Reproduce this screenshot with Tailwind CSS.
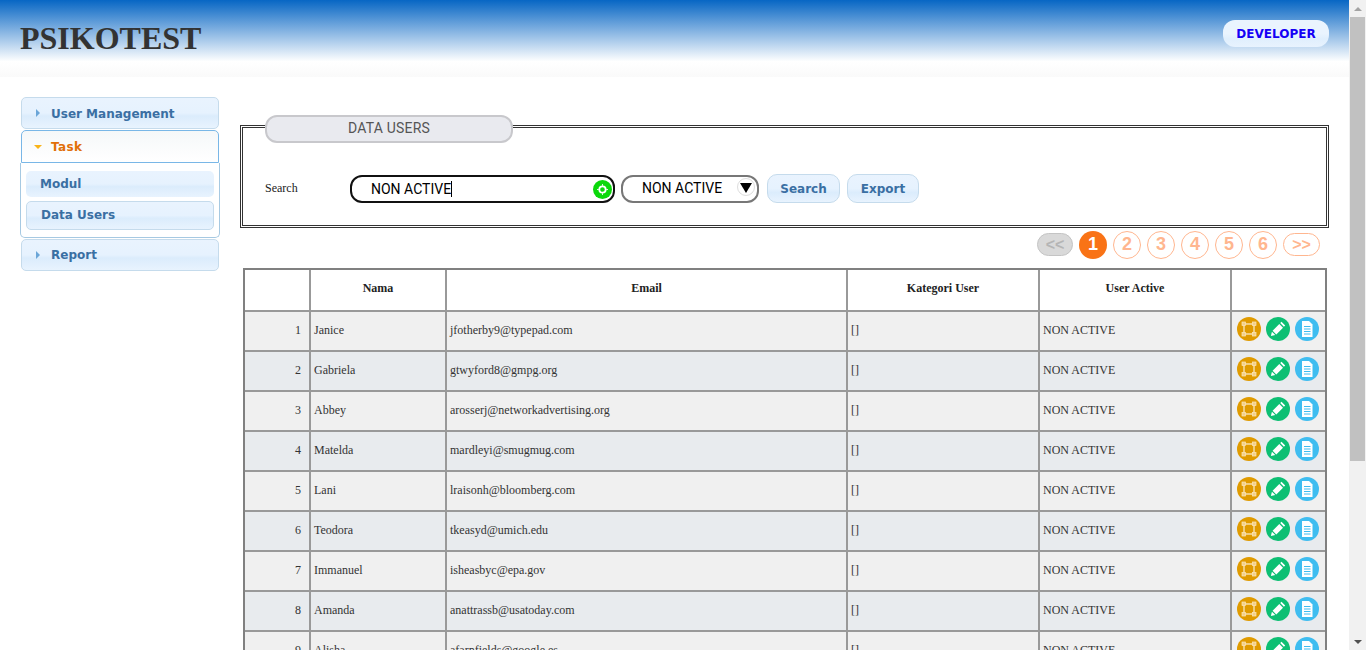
<!DOCTYPE html>
<html>
<head>
<meta charset="utf-8">
<script src="https://cdn.jsdelivr.net/npm/@tailwindcss/browser@4"></script>
</head>
<body class="bg-white h-[650px] overflow-hidden flex font-['Liberation_Serif',serif] text-[12px] text-[#333]">
<div class="w-[1349px] h-[650px] overflow-hidden shrink-0">
  <header class="h-[77px] bg-[linear-gradient(#0766c4_0%,#ffffff_80%,#fafafa_100%)] flex items-center justify-between pl-[20px] pr-[20px]">
    <h1 class="font-bold text-[32px] leading-none text-[#333] m-0 mb-[2px]">PSIKOTEST</h1>
    <span class="w-[106px] h-[27px] mb-[10px] rounded-[12px] bg-[linear-gradient(#eaf4fe_0%,#eaf4fe_50%,#e0effd_70%,#e8f3fe_100%)] flex items-center justify-center font-['DejaVu_Sans',sans-serif] font-bold text-[12px] text-[#1500f5]">DEVELOPER</span>
  </header>
  <div class="flex items-start pt-[20px]">
    <aside class="w-[198px] ml-[21px] shrink-0 font-['DejaVu_Sans',sans-serif] font-bold text-[12px]">
      <div class="h-[32px] rounded-[5px] border border-[#c5dbec] bg-[linear-gradient(#e9f3fe_0%,#e6f2fe_50%,#dbecfc_60%,#e8f3fe_100%)] flex items-center pl-[14px] text-[#3a6fa3] mb-[1px]">
        <span class="w-0 h-0 border-y-[4px] border-y-transparent border-l-[4px] border-l-[#6ba6d8] mr-[11px]"></span><span class="mt-[1px]">User Management</span>
      </div>
      <div class="h-[33px] rounded-t-[5px] border border-[#79b7e7] bg-[linear-gradient(#f5f8f9,#ffffff)] flex items-center pl-[12px] text-[#e17009]">
        <span class="w-0 h-0 border-x-[4px] border-x-transparent border-t-[4px] border-t-[#f9b418] mr-[9px]"></span><span class="tracking-[0.4px]">Task</span>
      </div>
      <div class="h-[75px] -mx-[1px] rounded-b-[5px] border border-t-0 border-[#a6c9e2] px-[5px] pt-[8px] text-[#3a6fa3]">
        <div class="h-[26px] rounded-[5px] bg-[linear-gradient(#e9f3fe_0%,#e6f2fe_50%,#dbecfc_60%,#e8f3fe_100%)] flex items-center pl-[14px] mb-[4px]">Modul</div>
        <div class="h-[29px] rounded-[5px] border border-[#c5dbec] bg-[linear-gradient(#e9f3fe_0%,#e6f2fe_50%,#dbecfc_60%,#e8f3fe_100%)] flex items-center pl-[14px] pb-[2px]">Data Users</div>
      </div>
      <div class="mt-[1px] h-[32px] rounded-[5px] border border-[#c5dbec] bg-[linear-gradient(#e9f3fe_0%,#e6f2fe_50%,#dbecfc_60%,#e8f3fe_100%)] flex items-center pl-[14px] text-[#3a6fa3]">
        <span class="w-0 h-0 border-y-[4px] border-y-transparent border-l-[4px] border-l-[#6ba6d8] mr-[11px]"></span>Report
      </div>
    </aside>
    <main class="ml-[21px] w-[1089px] shrink-0">
      <section class="relative border-[3px] border-double border-[#333] h-[103px] mt-[28px] pl-[22px] pr-[10px]">
        <h2 class="absolute left-[22px] -top-[13px] w-[248px] h-[28px] pb-[2px] rounded-[12px] border-2 border-[#c8c8cc] bg-[#e9eaef] flex items-center justify-center font-['Roboto',sans-serif] font-normal text-[14px] tracking-[0.2px] text-[#555]">DATA USERS</h2>
        <div class="flex items-center pt-[46px]">
          <label class="w-[85px] text-[12px] text-[#222] mb-[2px]">Search</label>
          <div class="relative w-[265px] h-[28px] rounded-[12px] border-2 border-[#111] flex items-center pl-[19px] font-['Roboto',sans-serif] text-[14px] text-black">
            <span class="border-r border-black leading-[16px]">NON ACTIVE</span>
            <span class="absolute right-[1px] top-[3px] w-[19px] h-[19px] rounded-full bg-[#0bd80b] flex items-center justify-center">
              <svg width="15" height="15" viewBox="0 0 15 15"><circle cx="7.500" cy="7.500" r="3.200" fill="none" stroke="#fff" stroke-width="1.800"/><path d="M7.500 2v2M7.500 11v2M2 7.500h2M11 7.500h2" stroke="#d8f8d8" stroke-width="1"/></svg>
            </span>
          </div>
          <div class="relative ml-[6px] w-[138px] h-[28px] rounded-[12px] border-2 border-[#777] flex items-center pl-[19px] font-['Roboto',sans-serif] text-[14px] text-black">
            NON ACTIVE
            <span class="absolute right-[2px] top-[1px] w-[18px] h-[18px] rounded-full border border-[#ddd] flex items-center justify-center">
              <span class="w-0 h-0 border-x-[6px] border-x-transparent border-t-[10px] border-t-black mt-[2px]"></span>
            </span>
          </div>
          <button class="ml-[8px] w-[73px] h-[29px] rounded-[10px] border border-[#c5dbec] bg-[linear-gradient(#e9f3fe_0%,#e6f2fe_50%,#dbecfc_65%,#e8f3fe_100%)] font-['DejaVu_Sans',sans-serif] font-bold text-[12px] text-[#3a6fa3]">Search</button>
          <button class="ml-[7px] w-[72px] h-[29px] rounded-[10px] border border-[#c5dbec] bg-[linear-gradient(#e9f3fe_0%,#e6f2fe_50%,#dbecfc_65%,#e8f3fe_100%)] font-['DejaVu_Sans',sans-serif] font-bold text-[12px] text-[#3a6fa3]">Export</button>
        </div>
      </section>
      <nav class="flex items-center justify-end gap-[6px] h-[30px] mt-[2px] pr-[9px] pb-[1px] font-['Liberation_Sans',sans-serif] font-bold text-[#ffb68f]">
        <span class="w-[36px] h-[23px] rounded-[12px] border border-[#c4c4c4] bg-[#d9d9d9] text-[#b5b5b5] text-[16px] flex items-center justify-center">&lt;&lt;</span>
        <span class="w-[28px] h-[28px] rounded-full bg-[#f97316] text-white text-[18px] flex items-center justify-center">1</span>
        <span class="w-[28px] h-[28px] rounded-full border border-[#ffb68f] text-[18px] flex items-center justify-center">2</span>
        <span class="w-[28px] h-[28px] rounded-full border border-[#ffb68f] text-[18px] flex items-center justify-center">3</span>
        <span class="w-[28px] h-[28px] rounded-full border border-[#ffb68f] text-[18px] flex items-center justify-center">4</span>
        <span class="w-[28px] h-[28px] rounded-full border border-[#ffb68f] text-[18px] flex items-center justify-center">5</span>
        <span class="w-[28px] h-[28px] rounded-full border border-[#ffb68f] text-[18px] flex items-center justify-center">6</span>
        <span class="w-[37px] h-[23px] rounded-[12px] border border-[#ffb68f] text-[16px] flex items-center justify-center">&gt;&gt;</span>
      </nav>
      <div class="ml-[3px] mt-[8px] w-[1084px] border-2 border-[#808080] text-[12px] text-[#333]">
        <div class="grid grid-cols-[64px_2px_134px_2px_399px_2px_190px_2px_190px_2px_93px] h-[40px] items-stretch font-bold text-[#222] text-center">
          <div></div><div class="bg-[#999]"></div>
          <div class="flex items-center justify-center pb-[4px]">Nama</div><div class="bg-[#999]"></div>
          <div class="flex items-center justify-center pb-[4px]">Email</div><div class="bg-[#999]"></div>
          <div class="flex items-center justify-center pb-[4px]">Kategori User</div><div class="bg-[#999]"></div>
          <div class="flex items-center justify-center pb-[4px]">User Active</div><div class="bg-[#999]"></div>
          <div></div>
        </div>

        <div class="grid grid-cols-[64px_2px_134px_2px_399px_2px_190px_2px_190px_2px_93px] h-[40px] border-t-2 border-[#999] bg-[#f0f0f0]">
          <div class="flex items-center justify-end pr-[8px] pb-[2px]">1</div><div class="bg-[#999]"></div>
          <div class="flex items-center pl-[3px] pb-[2px]">Janice</div><div class="bg-[#999]"></div>
          <div class="flex items-center pl-[3px] pb-[2px]">jfotherby9@typepad.com</div><div class="bg-[#999]"></div>
          <div class="flex items-center pl-[3px] pb-[2px]">[]</div><div class="bg-[#999]"></div>
          <div class="flex items-center pl-[3px] pb-[2px]">NON ACTIVE</div><div class="bg-[#999]"></div>
          <div class="flex items-center gap-[5px] pl-[5px] pb-[4px]">
            <svg width="24" height="24" viewBox="0 0 24 24"><circle cx="12" cy="12" r="12" fill="#e09b00"/><rect x="7" y="7" width="10" height="10" fill="none" stroke="#fbe7bd" stroke-width="1.300"/><rect x="5" y="5" width="3.500" height="3.500" fill="#f3cf85" stroke="#fbe7bd" stroke-width="0.700"/><rect x="15.500" y="5" width="3.500" height="3.500" fill="#f3cf85" stroke="#fbe7bd" stroke-width="0.700"/><rect x="5" y="15.500" width="3.500" height="3.500" fill="#f3cf85" stroke="#fbe7bd" stroke-width="0.700"/><rect x="15.500" y="15.500" width="3.500" height="3.500" fill="#f3cf85" stroke="#fbe7bd" stroke-width="0.700"/></svg>
            <svg width="24" height="24" viewBox="0 0 24 24"><circle cx="12" cy="12" r="12" fill="#0dbf73"/><path d="M15.500 4.800l3.700 3.700-1.300 1.300-3.700-3.700zM13.300 7l3.700 3.700-6.700 6.700-3.700-3.700zM5.900 14.700l3.400 3.400-4.400 1z" fill="#fff"/></svg>
            <svg width="24" height="24" viewBox="0 0 24 24"><circle cx="12" cy="12" r="12" fill="#3fbdf0"/><path d="M7 4h7l3.500 3.500V20H7z" fill="#fff"/><path d="M9 9.500h6.500M9 12h6.500M9 14.500h6.500M9 17h6.500" stroke="#3fbdf0" stroke-width="1"/></svg>
          </div>
        </div>
        <div class="grid grid-cols-[64px_2px_134px_2px_399px_2px_190px_2px_190px_2px_93px] h-[40px] border-t-2 border-[#999] bg-[#e8ebee]">
          <div class="flex items-center justify-end pr-[8px] pb-[2px]">2</div><div class="bg-[#999]"></div>
          <div class="flex items-center pl-[3px] pb-[2px]">Gabriela</div><div class="bg-[#999]"></div>
          <div class="flex items-center pl-[3px] pb-[2px]">gtwyford8@gmpg.org</div><div class="bg-[#999]"></div>
          <div class="flex items-center pl-[3px] pb-[2px]">[]</div><div class="bg-[#999]"></div>
          <div class="flex items-center pl-[3px] pb-[2px]">NON ACTIVE</div><div class="bg-[#999]"></div>
          <div class="flex items-center gap-[5px] pl-[5px] pb-[4px]">
            <svg width="24" height="24" viewBox="0 0 24 24"><circle cx="12" cy="12" r="12" fill="#e09b00"/><rect x="7" y="7" width="10" height="10" fill="none" stroke="#fbe7bd" stroke-width="1.300"/><rect x="5" y="5" width="3.500" height="3.500" fill="#f3cf85" stroke="#fbe7bd" stroke-width="0.700"/><rect x="15.500" y="5" width="3.500" height="3.500" fill="#f3cf85" stroke="#fbe7bd" stroke-width="0.700"/><rect x="5" y="15.500" width="3.500" height="3.500" fill="#f3cf85" stroke="#fbe7bd" stroke-width="0.700"/><rect x="15.500" y="15.500" width="3.500" height="3.500" fill="#f3cf85" stroke="#fbe7bd" stroke-width="0.700"/></svg>
            <svg width="24" height="24" viewBox="0 0 24 24"><circle cx="12" cy="12" r="12" fill="#0dbf73"/><path d="M15.500 4.800l3.700 3.700-1.300 1.300-3.700-3.700zM13.300 7l3.700 3.700-6.700 6.700-3.700-3.700zM5.900 14.700l3.400 3.400-4.400 1z" fill="#fff"/></svg>
            <svg width="24" height="24" viewBox="0 0 24 24"><circle cx="12" cy="12" r="12" fill="#3fbdf0"/><path d="M7 4h7l3.500 3.500V20H7z" fill="#fff"/><path d="M9 9.500h6.500M9 12h6.500M9 14.500h6.500M9 17h6.500" stroke="#3fbdf0" stroke-width="1"/></svg>
          </div>
        </div>
        <div class="grid grid-cols-[64px_2px_134px_2px_399px_2px_190px_2px_190px_2px_93px] h-[40px] border-t-2 border-[#999] bg-[#f0f0f0]">
          <div class="flex items-center justify-end pr-[8px] pb-[2px]">3</div><div class="bg-[#999]"></div>
          <div class="flex items-center pl-[3px] pb-[2px]">Abbey</div><div class="bg-[#999]"></div>
          <div class="flex items-center pl-[3px] pb-[2px]">arosserj@networkadvertising.org</div><div class="bg-[#999]"></div>
          <div class="flex items-center pl-[3px] pb-[2px]">[]</div><div class="bg-[#999]"></div>
          <div class="flex items-center pl-[3px] pb-[2px]">NON ACTIVE</div><div class="bg-[#999]"></div>
          <div class="flex items-center gap-[5px] pl-[5px] pb-[4px]">
            <svg width="24" height="24" viewBox="0 0 24 24"><circle cx="12" cy="12" r="12" fill="#e09b00"/><rect x="7" y="7" width="10" height="10" fill="none" stroke="#fbe7bd" stroke-width="1.300"/><rect x="5" y="5" width="3.500" height="3.500" fill="#f3cf85" stroke="#fbe7bd" stroke-width="0.700"/><rect x="15.500" y="5" width="3.500" height="3.500" fill="#f3cf85" stroke="#fbe7bd" stroke-width="0.700"/><rect x="5" y="15.500" width="3.500" height="3.500" fill="#f3cf85" stroke="#fbe7bd" stroke-width="0.700"/><rect x="15.500" y="15.500" width="3.500" height="3.500" fill="#f3cf85" stroke="#fbe7bd" stroke-width="0.700"/></svg>
            <svg width="24" height="24" viewBox="0 0 24 24"><circle cx="12" cy="12" r="12" fill="#0dbf73"/><path d="M15.500 4.800l3.700 3.700-1.300 1.300-3.700-3.700zM13.300 7l3.700 3.700-6.700 6.700-3.700-3.700zM5.900 14.700l3.400 3.400-4.400 1z" fill="#fff"/></svg>
            <svg width="24" height="24" viewBox="0 0 24 24"><circle cx="12" cy="12" r="12" fill="#3fbdf0"/><path d="M7 4h7l3.500 3.500V20H7z" fill="#fff"/><path d="M9 9.500h6.500M9 12h6.500M9 14.500h6.500M9 17h6.500" stroke="#3fbdf0" stroke-width="1"/></svg>
          </div>
        </div>
        <div class="grid grid-cols-[64px_2px_134px_2px_399px_2px_190px_2px_190px_2px_93px] h-[40px] border-t-2 border-[#999] bg-[#e8ebee]">
          <div class="flex items-center justify-end pr-[8px] pb-[2px]">4</div><div class="bg-[#999]"></div>
          <div class="flex items-center pl-[3px] pb-[2px]">Matelda</div><div class="bg-[#999]"></div>
          <div class="flex items-center pl-[3px] pb-[2px]">mardleyi@smugmug.com</div><div class="bg-[#999]"></div>
          <div class="flex items-center pl-[3px] pb-[2px]">[]</div><div class="bg-[#999]"></div>
          <div class="flex items-center pl-[3px] pb-[2px]">NON ACTIVE</div><div class="bg-[#999]"></div>
          <div class="flex items-center gap-[5px] pl-[5px] pb-[4px]">
            <svg width="24" height="24" viewBox="0 0 24 24"><circle cx="12" cy="12" r="12" fill="#e09b00"/><rect x="7" y="7" width="10" height="10" fill="none" stroke="#fbe7bd" stroke-width="1.300"/><rect x="5" y="5" width="3.500" height="3.500" fill="#f3cf85" stroke="#fbe7bd" stroke-width="0.700"/><rect x="15.500" y="5" width="3.500" height="3.500" fill="#f3cf85" stroke="#fbe7bd" stroke-width="0.700"/><rect x="5" y="15.500" width="3.500" height="3.500" fill="#f3cf85" stroke="#fbe7bd" stroke-width="0.700"/><rect x="15.500" y="15.500" width="3.500" height="3.500" fill="#f3cf85" stroke="#fbe7bd" stroke-width="0.700"/></svg>
            <svg width="24" height="24" viewBox="0 0 24 24"><circle cx="12" cy="12" r="12" fill="#0dbf73"/><path d="M15.500 4.800l3.700 3.700-1.300 1.300-3.700-3.700zM13.300 7l3.700 3.700-6.700 6.700-3.700-3.700zM5.900 14.700l3.400 3.400-4.400 1z" fill="#fff"/></svg>
            <svg width="24" height="24" viewBox="0 0 24 24"><circle cx="12" cy="12" r="12" fill="#3fbdf0"/><path d="M7 4h7l3.500 3.500V20H7z" fill="#fff"/><path d="M9 9.500h6.500M9 12h6.500M9 14.500h6.500M9 17h6.500" stroke="#3fbdf0" stroke-width="1"/></svg>
          </div>
        </div>
        <div class="grid grid-cols-[64px_2px_134px_2px_399px_2px_190px_2px_190px_2px_93px] h-[40px] border-t-2 border-[#999] bg-[#f0f0f0]">
          <div class="flex items-center justify-end pr-[8px] pb-[2px]">5</div><div class="bg-[#999]"></div>
          <div class="flex items-center pl-[3px] pb-[2px]">Lani</div><div class="bg-[#999]"></div>
          <div class="flex items-center pl-[3px] pb-[2px]">lraisonh@bloomberg.com</div><div class="bg-[#999]"></div>
          <div class="flex items-center pl-[3px] pb-[2px]">[]</div><div class="bg-[#999]"></div>
          <div class="flex items-center pl-[3px] pb-[2px]">NON ACTIVE</div><div class="bg-[#999]"></div>
          <div class="flex items-center gap-[5px] pl-[5px] pb-[4px]">
            <svg width="24" height="24" viewBox="0 0 24 24"><circle cx="12" cy="12" r="12" fill="#e09b00"/><rect x="7" y="7" width="10" height="10" fill="none" stroke="#fbe7bd" stroke-width="1.300"/><rect x="5" y="5" width="3.500" height="3.500" fill="#f3cf85" stroke="#fbe7bd" stroke-width="0.700"/><rect x="15.500" y="5" width="3.500" height="3.500" fill="#f3cf85" stroke="#fbe7bd" stroke-width="0.700"/><rect x="5" y="15.500" width="3.500" height="3.500" fill="#f3cf85" stroke="#fbe7bd" stroke-width="0.700"/><rect x="15.500" y="15.500" width="3.500" height="3.500" fill="#f3cf85" stroke="#fbe7bd" stroke-width="0.700"/></svg>
            <svg width="24" height="24" viewBox="0 0 24 24"><circle cx="12" cy="12" r="12" fill="#0dbf73"/><path d="M15.500 4.800l3.700 3.700-1.300 1.300-3.700-3.700zM13.300 7l3.700 3.700-6.700 6.700-3.700-3.700zM5.900 14.700l3.400 3.400-4.400 1z" fill="#fff"/></svg>
            <svg width="24" height="24" viewBox="0 0 24 24"><circle cx="12" cy="12" r="12" fill="#3fbdf0"/><path d="M7 4h7l3.500 3.500V20H7z" fill="#fff"/><path d="M9 9.500h6.500M9 12h6.500M9 14.500h6.500M9 17h6.500" stroke="#3fbdf0" stroke-width="1"/></svg>
          </div>
        </div>
        <div class="grid grid-cols-[64px_2px_134px_2px_399px_2px_190px_2px_190px_2px_93px] h-[40px] border-t-2 border-[#999] bg-[#e8ebee]">
          <div class="flex items-center justify-end pr-[8px] pb-[2px]">6</div><div class="bg-[#999]"></div>
          <div class="flex items-center pl-[3px] pb-[2px]">Teodora</div><div class="bg-[#999]"></div>
          <div class="flex items-center pl-[3px] pb-[2px]">tkeasyd@umich.edu</div><div class="bg-[#999]"></div>
          <div class="flex items-center pl-[3px] pb-[2px]">[]</div><div class="bg-[#999]"></div>
          <div class="flex items-center pl-[3px] pb-[2px]">NON ACTIVE</div><div class="bg-[#999]"></div>
          <div class="flex items-center gap-[5px] pl-[5px] pb-[4px]">
            <svg width="24" height="24" viewBox="0 0 24 24"><circle cx="12" cy="12" r="12" fill="#e09b00"/><rect x="7" y="7" width="10" height="10" fill="none" stroke="#fbe7bd" stroke-width="1.300"/><rect x="5" y="5" width="3.500" height="3.500" fill="#f3cf85" stroke="#fbe7bd" stroke-width="0.700"/><rect x="15.500" y="5" width="3.500" height="3.500" fill="#f3cf85" stroke="#fbe7bd" stroke-width="0.700"/><rect x="5" y="15.500" width="3.500" height="3.500" fill="#f3cf85" stroke="#fbe7bd" stroke-width="0.700"/><rect x="15.500" y="15.500" width="3.500" height="3.500" fill="#f3cf85" stroke="#fbe7bd" stroke-width="0.700"/></svg>
            <svg width="24" height="24" viewBox="0 0 24 24"><circle cx="12" cy="12" r="12" fill="#0dbf73"/><path d="M15.500 4.800l3.700 3.700-1.300 1.300-3.700-3.700zM13.300 7l3.700 3.700-6.700 6.700-3.700-3.700zM5.900 14.700l3.400 3.400-4.400 1z" fill="#fff"/></svg>
            <svg width="24" height="24" viewBox="0 0 24 24"><circle cx="12" cy="12" r="12" fill="#3fbdf0"/><path d="M7 4h7l3.500 3.500V20H7z" fill="#fff"/><path d="M9 9.500h6.500M9 12h6.500M9 14.500h6.500M9 17h6.500" stroke="#3fbdf0" stroke-width="1"/></svg>
          </div>
        </div>
        <div class="grid grid-cols-[64px_2px_134px_2px_399px_2px_190px_2px_190px_2px_93px] h-[40px] border-t-2 border-[#999] bg-[#f0f0f0]">
          <div class="flex items-center justify-end pr-[8px] pb-[2px]">7</div><div class="bg-[#999]"></div>
          <div class="flex items-center pl-[3px] pb-[2px]">Immanuel</div><div class="bg-[#999]"></div>
          <div class="flex items-center pl-[3px] pb-[2px]">isheasbyc@epa.gov</div><div class="bg-[#999]"></div>
          <div class="flex items-center pl-[3px] pb-[2px]">[]</div><div class="bg-[#999]"></div>
          <div class="flex items-center pl-[3px] pb-[2px]">NON ACTIVE</div><div class="bg-[#999]"></div>
          <div class="flex items-center gap-[5px] pl-[5px] pb-[4px]">
            <svg width="24" height="24" viewBox="0 0 24 24"><circle cx="12" cy="12" r="12" fill="#e09b00"/><rect x="7" y="7" width="10" height="10" fill="none" stroke="#fbe7bd" stroke-width="1.300"/><rect x="5" y="5" width="3.500" height="3.500" fill="#f3cf85" stroke="#fbe7bd" stroke-width="0.700"/><rect x="15.500" y="5" width="3.500" height="3.500" fill="#f3cf85" stroke="#fbe7bd" stroke-width="0.700"/><rect x="5" y="15.500" width="3.500" height="3.500" fill="#f3cf85" stroke="#fbe7bd" stroke-width="0.700"/><rect x="15.500" y="15.500" width="3.500" height="3.500" fill="#f3cf85" stroke="#fbe7bd" stroke-width="0.700"/></svg>
            <svg width="24" height="24" viewBox="0 0 24 24"><circle cx="12" cy="12" r="12" fill="#0dbf73"/><path d="M15.500 4.800l3.700 3.700-1.300 1.300-3.700-3.700zM13.300 7l3.700 3.700-6.700 6.700-3.700-3.700zM5.900 14.700l3.400 3.400-4.400 1z" fill="#fff"/></svg>
            <svg width="24" height="24" viewBox="0 0 24 24"><circle cx="12" cy="12" r="12" fill="#3fbdf0"/><path d="M7 4h7l3.500 3.500V20H7z" fill="#fff"/><path d="M9 9.500h6.500M9 12h6.500M9 14.500h6.500M9 17h6.500" stroke="#3fbdf0" stroke-width="1"/></svg>
          </div>
        </div>
        <div class="grid grid-cols-[64px_2px_134px_2px_399px_2px_190px_2px_190px_2px_93px] h-[40px] border-t-2 border-[#999] bg-[#e8ebee]">
          <div class="flex items-center justify-end pr-[8px] pb-[2px]">8</div><div class="bg-[#999]"></div>
          <div class="flex items-center pl-[3px] pb-[2px]">Amanda</div><div class="bg-[#999]"></div>
          <div class="flex items-center pl-[3px] pb-[2px]">anattrassb@usatoday.com</div><div class="bg-[#999]"></div>
          <div class="flex items-center pl-[3px] pb-[2px]">[]</div><div class="bg-[#999]"></div>
          <div class="flex items-center pl-[3px] pb-[2px]">NON ACTIVE</div><div class="bg-[#999]"></div>
          <div class="flex items-center gap-[5px] pl-[5px] pb-[4px]">
            <svg width="24" height="24" viewBox="0 0 24 24"><circle cx="12" cy="12" r="12" fill="#e09b00"/><rect x="7" y="7" width="10" height="10" fill="none" stroke="#fbe7bd" stroke-width="1.300"/><rect x="5" y="5" width="3.500" height="3.500" fill="#f3cf85" stroke="#fbe7bd" stroke-width="0.700"/><rect x="15.500" y="5" width="3.500" height="3.500" fill="#f3cf85" stroke="#fbe7bd" stroke-width="0.700"/><rect x="5" y="15.500" width="3.500" height="3.500" fill="#f3cf85" stroke="#fbe7bd" stroke-width="0.700"/><rect x="15.500" y="15.500" width="3.500" height="3.500" fill="#f3cf85" stroke="#fbe7bd" stroke-width="0.700"/></svg>
            <svg width="24" height="24" viewBox="0 0 24 24"><circle cx="12" cy="12" r="12" fill="#0dbf73"/><path d="M15.500 4.800l3.700 3.700-1.300 1.300-3.700-3.700zM13.300 7l3.700 3.700-6.700 6.700-3.700-3.700zM5.900 14.700l3.400 3.400-4.400 1z" fill="#fff"/></svg>
            <svg width="24" height="24" viewBox="0 0 24 24"><circle cx="12" cy="12" r="12" fill="#3fbdf0"/><path d="M7 4h7l3.500 3.500V20H7z" fill="#fff"/><path d="M9 9.500h6.500M9 12h6.500M9 14.500h6.500M9 17h6.500" stroke="#3fbdf0" stroke-width="1"/></svg>
          </div>
        </div>
        <div class="grid grid-cols-[64px_2px_134px_2px_399px_2px_190px_2px_190px_2px_93px] h-[40px] border-t-2 border-[#999] bg-[#f0f0f0]">
          <div class="flex items-center justify-end pr-[8px] pb-[2px]">9</div><div class="bg-[#999]"></div>
          <div class="flex items-center pl-[3px] pb-[2px]">Alisha</div><div class="bg-[#999]"></div>
          <div class="flex items-center pl-[3px] pb-[2px]">afarnfields@google.es</div><div class="bg-[#999]"></div>
          <div class="flex items-center pl-[3px] pb-[2px]">[]</div><div class="bg-[#999]"></div>
          <div class="flex items-center pl-[3px] pb-[2px]">NON ACTIVE</div><div class="bg-[#999]"></div>
          <div class="flex items-center gap-[5px] pl-[5px] pb-[4px]">
            <svg width="24" height="24" viewBox="0 0 24 24"><circle cx="12" cy="12" r="12" fill="#e09b00"/><rect x="7" y="7" width="10" height="10" fill="none" stroke="#fbe7bd" stroke-width="1.300"/><rect x="5" y="5" width="3.500" height="3.500" fill="#f3cf85" stroke="#fbe7bd" stroke-width="0.700"/><rect x="15.500" y="5" width="3.500" height="3.500" fill="#f3cf85" stroke="#fbe7bd" stroke-width="0.700"/><rect x="5" y="15.500" width="3.500" height="3.500" fill="#f3cf85" stroke="#fbe7bd" stroke-width="0.700"/><rect x="15.500" y="15.500" width="3.500" height="3.500" fill="#f3cf85" stroke="#fbe7bd" stroke-width="0.700"/></svg>
            <svg width="24" height="24" viewBox="0 0 24 24"><circle cx="12" cy="12" r="12" fill="#0dbf73"/><path d="M15.500 4.800l3.700 3.700-1.300 1.300-3.700-3.700zM13.300 7l3.700 3.700-6.700 6.700-3.700-3.700zM5.900 14.700l3.400 3.400-4.400 1z" fill="#fff"/></svg>
            <svg width="24" height="24" viewBox="0 0 24 24"><circle cx="12" cy="12" r="12" fill="#3fbdf0"/><path d="M7 4h7l3.500 3.500V20H7z" fill="#fff"/><path d="M9 9.500h6.500M9 12h6.500M9 14.500h6.500M9 17h6.500" stroke="#3fbdf0" stroke-width="1"/></svg>
          </div>
        </div>
      </div>
    </main>
  </div>
</div>
<div class="w-[17px] h-[650px] bg-[#f1f1f1] shrink-0 flex flex-col items-center">
  <div class="h-[17px] flex items-center justify-center"><span class="w-0 h-0 border-x-[4px] border-x-transparent border-b-[4px] border-b-[#a3a3a3]"></span></div>
  <div class="w-[15px] h-[444px] bg-[#c1c1c1]"></div>
  <div class="flex-1"></div>
  <div class="h-[17px] flex items-center justify-center"><span class="w-0 h-0 border-x-[4px] border-x-transparent border-t-[4px] border-t-[#505050]"></span></div>
</div>
</body>
</html>
